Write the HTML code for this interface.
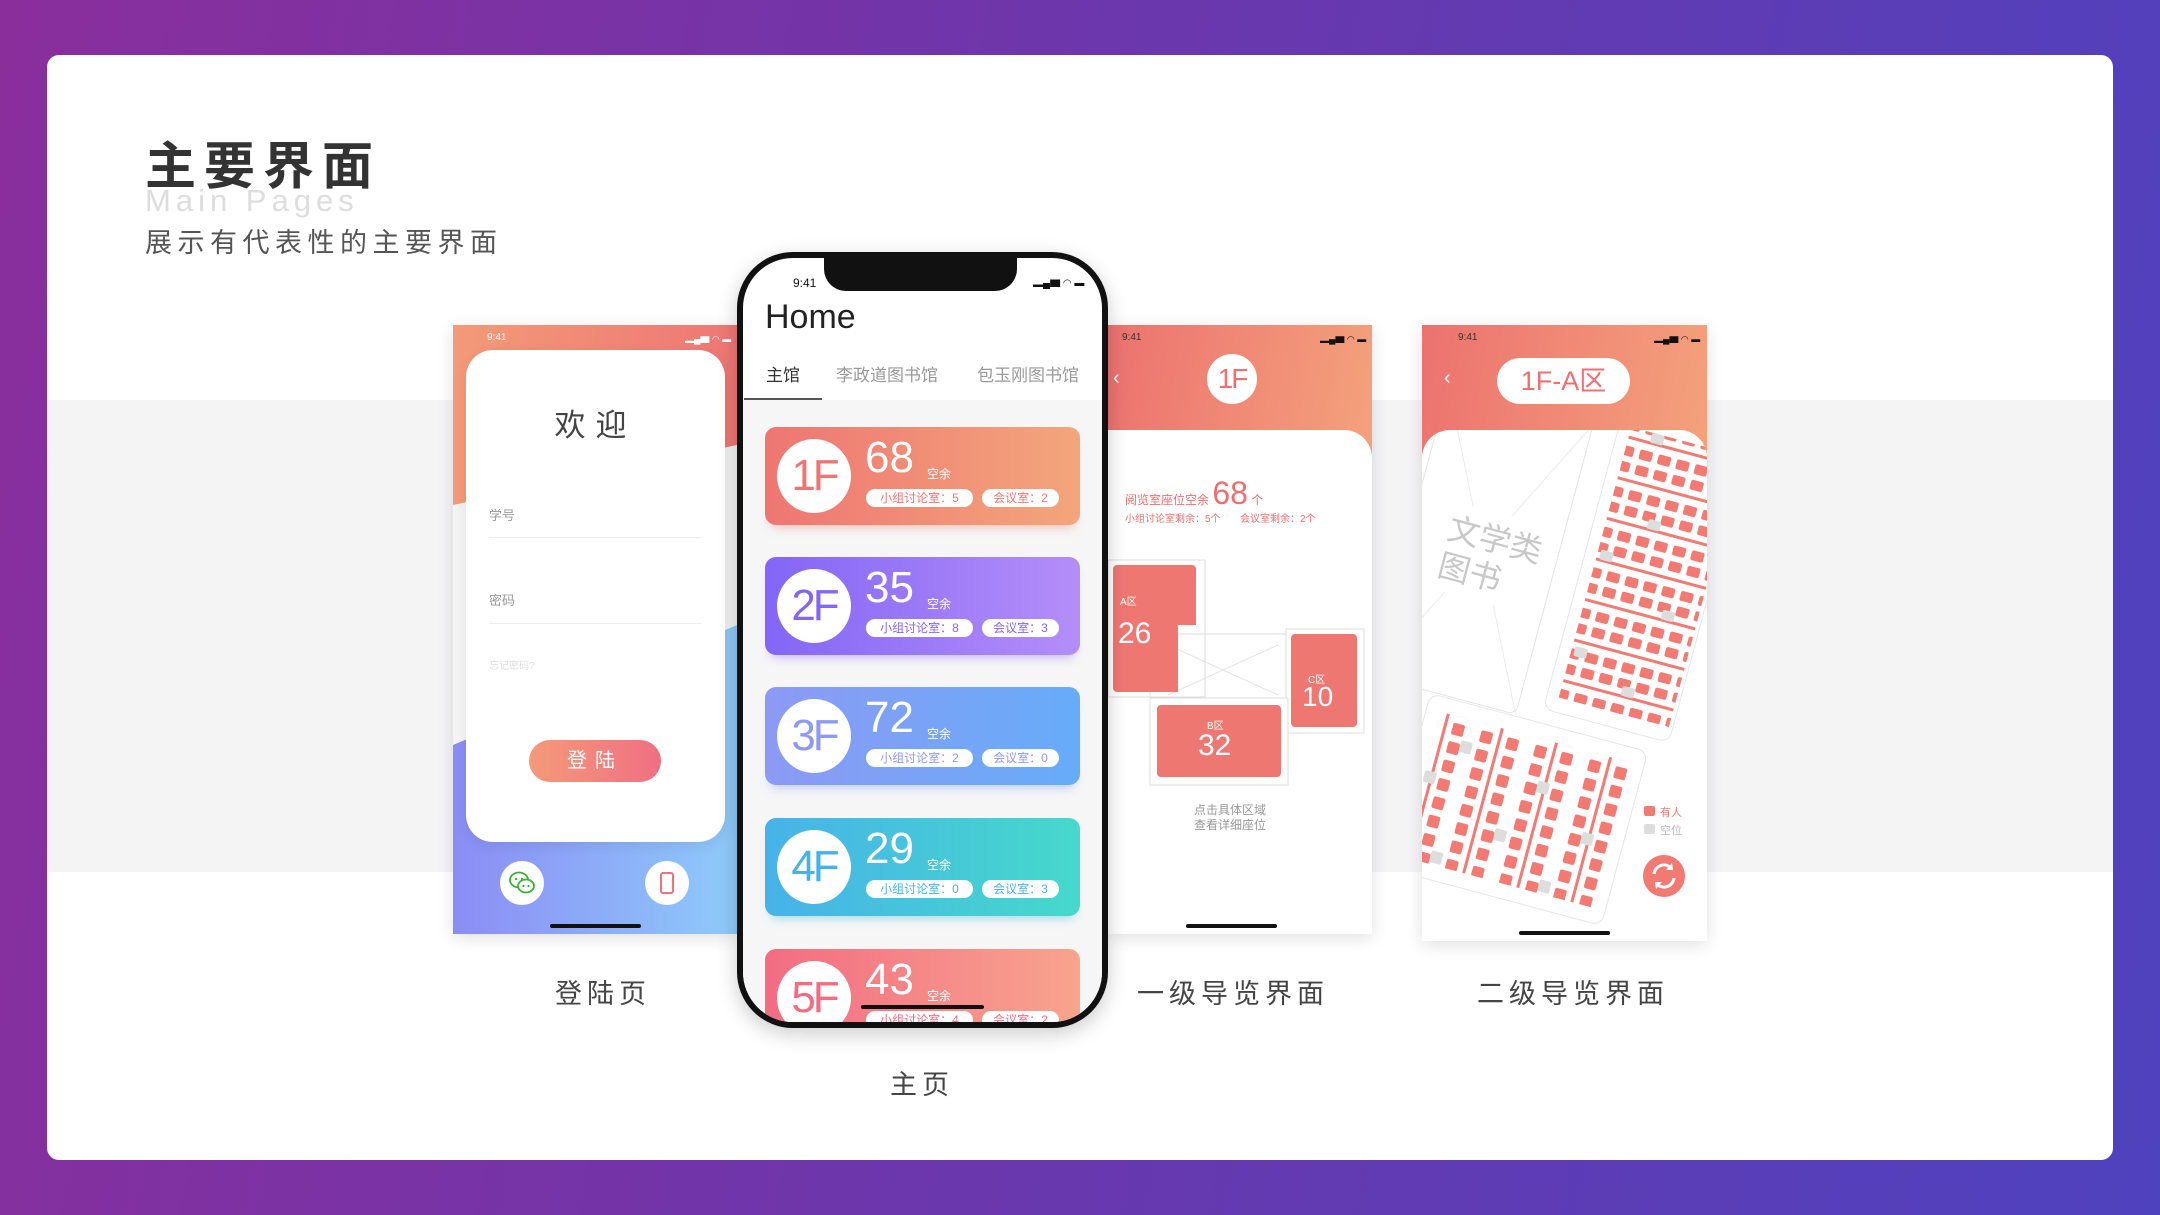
<!DOCTYPE html>
<html><head><meta charset="utf-8">
<style>
*{margin:0;padding:0;box-sizing:border-box}
body{width:2160px;height:1215px;overflow:hidden;background:linear-gradient(100deg,#8a2e9c 0%,#6a37ad 50%,#4f42be 100%);font-family:"Liberation Sans","Noto Sans CJK SC",sans-serif;position:relative}
.abs{position:absolute}
#card{left:47px;top:55px;width:2066px;height:1105px;background:#fff;border-radius:12px;overflow:hidden}
.band{left:0;top:345px;width:100%;height:472px;background:#f4f4f5}
.lbl{font-size:27px;color:#444;letter-spacing:5px;text-align:center;width:300px}
.scr{overflow:hidden;box-shadow:0 4px 16px rgba(0,0,0,.12)}
.hdr{background:linear-gradient(100deg,#ec726f,#f4a27c)}
.card{left:22px;width:315px;height:98px;border-radius:11px;color:#fff}
.circ{left:12px;top:12px;width:74px;height:74px;border-radius:50%;background:#fff;font-size:44px;text-align:center;line-height:74px;letter-spacing:-3px}
.num{left:80px;top:6px;font-size:44px}
.ky{left:140px;top:38px;font-size:12px}
.pill{top:62px;height:18px;border-radius:9px;background:#fff;font-size:12px;line-height:18px;text-align:center}
.hb{height:4px;border-radius:2px;background:#111}
</style></head><body>
<div id="card" class="abs">
 <div class="abs band"></div>
 <div class="abs" style="left:98px;top:70px;font-size:51px;font-weight:bold;color:#333;letter-spacing:8px">主要界面</div>
 <div class="abs" style="left:98px;top:128px;font-size:31px;color:#ddd;letter-spacing:5px">Main Pages</div>
 <div class="abs" style="left:98px;top:166px;font-size:27px;color:#555;letter-spacing:5.5px">展示有代表性的主要界面</div>
 <div class="abs lbl" style="left:406px;top:917px">登陆页</div>
 <div class="abs lbl" style="left:725px;top:1008px">主页</div>
 <div class="abs lbl" style="left:1036px;top:917px">一级导览界面</div>
 <div class="abs lbl" style="left:1376px;top:917px">二级导览界面</div>
</div>

<!-- login screen -->
<div class="abs scr" style="left:453px;top:325px;width:284px;height:609px;background:#f4f4f5">
 <svg class="abs" style="left:0;top:0" width="284" height="609">
  <defs>
   <linearGradient id="og" x1="0" y1="0" x2="1" y2="0"><stop offset="0" stop-color="#f39a78"/><stop offset="1" stop-color="#ee7774"/></linearGradient>
   <linearGradient id="bg2" x1="0" y1="0" x2="1" y2="0"><stop offset="0" stop-color="#8b8cf5"/><stop offset="1" stop-color="#8ecbfa"/></linearGradient>
  </defs>
  <polygon points="0,0 284,0 284,120 0,180" fill="url(#og)"/>
  <polygon points="0,420 284,300 284,609 0,609" fill="url(#bg2)"/>
 </svg>
 <div class="abs" style="left:34px;top:7px;font-size:10px;color:#fff">9:41</div>
 <div class="abs" style="left:232px;top:7px;font-size:9px;color:#fff">▂▄▆ ◠ ▬</div>
 <div class="abs" style="left:13px;top:25px;width:259px;height:492px;background:#fff;border-radius:27px;box-shadow:0 4px 14px rgba(0,0,0,.08)">
  <div class="abs" style="left:0;width:100%;top:50px;text-align:center;font-size:31px;color:#444;letter-spacing:10px">欢迎</div>
  <div class="abs" style="left:23px;top:155px;font-size:13px;color:#999">学号</div>
  <div class="abs" style="left:23px;top:187px;width:213px;height:1px;background:#eee"></div>
  <div class="abs" style="left:23px;top:240px;font-size:13px;color:#999">密码</div>
  <div class="abs" style="left:23px;top:273px;width:213px;height:1px;background:#eee"></div>
  <div class="abs" style="left:23px;top:307px;font-size:10px;color:#ddd">忘记密码?</div>
  <div class="abs" style="left:63px;top:390px;width:132px;height:42px;border-radius:21px;background:linear-gradient(90deg,#f59a7a,#f06f82);color:#fff;font-size:20px;text-align:center;line-height:42px;letter-spacing:8px">登陆</div>
 </div>
 <div class="abs" style="left:47px;top:536px;width:44px;height:44px;border-radius:50%;background:#fff">
  <svg width="44" height="44"><ellipse cx="19" cy="19" rx="9" ry="7.5" fill="none" stroke="#3cb034" stroke-width="1.8"/><ellipse cx="26" cy="25" rx="8" ry="6.5" fill="#fff" stroke="#3cb034" stroke-width="1.8"/><circle cx="16" cy="18" r="1.2" fill="#3cb034"/><circle cx="22" cy="18" r="1.2" fill="#3cb034"/><circle cx="23.5" cy="25" r="1.1" fill="#3cb034"/><circle cx="28.5" cy="25" r="1.1" fill="#3cb034"/></svg>
 </div>
 <div class="abs" style="left:192px;top:536px;width:44px;height:44px;border-radius:50%;background:#fff"><div class="abs" style="left:15px;top:11px;width:14px;height:22px;border:2px solid #f07080;border-radius:3px"></div></div>
 <div class="abs hb" style="left:97px;top:599px;width:91px"></div>
</div>

<!-- nav 1 -->
<div class="abs scr" style="left:1108px;top:325px;width:264px;height:609px;background:#fff">
 <div class="abs hdr" style="left:0;top:0;width:264px;height:140px"></div>
 <div class="abs" style="left:14px;top:7px;font-size:10px;color:#333">9:41</div>
 <div class="abs" style="left:212px;top:7px;font-size:9px;color:#111">▂▄▆ ◠ ▬</div>
 <div class="abs" style="left:5px;top:42px;font-size:20px;color:#fff">‹</div>
 <div class="abs" style="left:99px;top:29px;width:50px;height:50px;border-radius:50%;background:#fff;color:#ee7070;font-size:28px;text-align:center;line-height:50px;letter-spacing:-2px">1F</div>
 <div class="abs" style="left:0;top:105px;width:264px;height:504px;background:#fff;border-radius:0 28px 0 0"></div>
 <div class="abs" style="left:17px;top:150px;color:#ee6f6f;white-space:nowrap"><span style="font-size:12px">阅览室座位空余 </span><span style="font-size:32px">68</span><span style="font-size:12px"> 个</span></div>
 <div class="abs" style="left:17px;top:185px;font-size:10px;color:#ee6f6f;white-space:nowrap">小组讨论室剩余：5个 &nbsp; &nbsp; &nbsp; 会议室剩余：2个</div>
 <svg class="abs" style="left:0;top:0" width="264" height="609">
  <rect x="42" y="309" width="214" height="99" fill="#fff" stroke="#ddd"/>
  <line x1="60" y1="320" x2="170" y2="370" stroke="#e4e4e4"/><line x1="60" y1="370" x2="170" y2="320" stroke="#e4e4e4"/>
  <rect x="0" y="235" width="97" height="137" fill="none" stroke="#ddd"/>
  <path d="M9,240 H84 a4,4 0 0 1 4,4 V300 H70 V367 H9 a4,4 0 0 1 -4,-4 V244 a4,4 0 0 1 4,-4z" fill="#ee7772"/>
  <rect x="178" y="304" width="78" height="104" fill="#fff" stroke="#ddd"/>
  <rect x="183" y="309" width="66" height="93" rx="4" fill="#ee7772"/>
  <rect x="42" y="373" width="138" height="87" fill="#fff" stroke="#ddd"/>
  <rect x="49" y="380" width="124" height="72" rx="4" fill="#ee7772"/>
  <text x="12" y="280" font-size="10" fill="#fff">A区</text>
  <text x="10" y="318" font-size="30" fill="#fff">26</text>
  <text x="200" y="358" font-size="10" fill="#fff">C区</text>
  <text x="194" y="381" font-size="28" fill="#fff">10</text>
  <text x="99" y="404" font-size="10" fill="#fff">B区</text>
  <text x="90" y="430" font-size="30" fill="#fff">32</text>
  <text x="122" y="489" font-size="12" fill="#999" text-anchor="middle">点击具体区域</text>
  <text x="122" y="504" font-size="12" fill="#999" text-anchor="middle">查看详细座位</text>
 </svg>
 <div class="abs hb" style="left:78px;top:599px;width:91px"></div>
</div>

<!-- nav 2 -->
<div class="abs scr" style="left:1422px;top:325px;width:285px;height:616px;background:#fff">
 <div class="abs hdr" style="left:0;top:0;width:285px;height:140px"></div>
 <div class="abs" style="left:36px;top:7px;font-size:10px;color:#333">9:41</div>
 <div class="abs" style="left:232px;top:7px;font-size:9px;color:#111">▂▄▆ ◠ ▬</div>
 <div class="abs" style="left:22px;top:42px;font-size:20px;color:#fff">‹</div>
 <div class="abs" style="left:75px;top:33px;width:133px;height:46px;border-radius:23px;background:#fff;color:#ee7070;font-size:27px;text-align:center;line-height:46px">1F-A区</div>
 <div class="abs" style="left:0;top:105px;width:285px;height:511px;background:#fff;border-radius:28px 28px 0 0;overflow:hidden">
  <svg width="285" height="511">
   <defs>
    <pattern id="rs" width="19" height="42" patternUnits="userSpaceOnUse"><rect x="3" y="0" width="13" height="10" rx="2" fill="#f27a72"/><rect x="3" y="16" width="13" height="10" rx="2" fill="#f27a72"/><rect x="0" y="32" width="19" height="3" fill="#f27a72"/></pattern>
    <pattern id="cs" width="56" height="19" patternUnits="userSpaceOnUse"><rect x="0" y="3" width="12" height="12" rx="2" fill="#f27a72"/><rect x="18" y="0" width="3" height="19" fill="#f27a72"/><rect x="27" y="3" width="12" height="12" rx="2" fill="#f27a72"/></pattern>
   </defs>
   <g transform="translate(60,120) rotate(15)">
    <rect x="-75" y="-150" width="150" height="300" rx="8" fill="none" stroke="#e4e4e4"/>
    <line x1="-75" y1="-150" x2="75" y2="150" stroke="#ececec"/><line x1="75" y1="-150" x2="-75" y2="150" stroke="#ececec"/>
    <rect x="-45" y="-40" width="100" height="90" fill="#fff"/>
    <text x="-38" y="-2" font-size="32" fill="#c8c8c8">文学类</text>
    <text x="-38" y="36" font-size="32" fill="#c8c8c8">图书</text>
   </g>
   <g transform="translate(220,150) rotate(15)">
    <rect x="-62" y="-160" width="130" height="310" rx="10" fill="#fff" stroke="#e6e6e6"/>
    <rect x="-50" y="-145" width="114" height="280" fill="url(#rs)"/>
    <rect x="-28" y="-145" width="13" height="10" rx="2" fill="#ddd"/><rect x="47" y="-103" width="13" height="10" rx="2" fill="#ddd"/><rect x="-9" y="-61" width="13" height="10" rx="2" fill="#ddd"/><rect x="-47" y="-19" width="13" height="10" rx="2" fill="#ddd"/><rect x="28" y="23" width="13" height="10" rx="2" fill="#ddd"/><rect x="-47" y="81" width="13" height="10" rx="2" fill="#ddd"/><rect x="9" y="107" width="13" height="10" rx="2" fill="#ddd"/>
   </g>
   <g transform="translate(95,385) rotate(15)">
    <rect x="-115" y="-95" width="225" height="180" rx="10" fill="#fff" stroke="#e6e6e6"/>
    <rect x="-100" y="-80" width="200" height="150" fill="url(#cs)"/>
    <rect x="-73" y="-58" width="12" height="12" rx="2" fill="#ddd"/><rect x="-100" y="-20" width="12" height="12" rx="2" fill="#ddd"/><rect x="-17" y="18" width="12" height="12" rx="2" fill="#ddd"/><rect x="12" y="-39" width="12" height="12" rx="2" fill="#ddd"/><rect x="68" y="-1" width="12" height="12" rx="2" fill="#ddd"/><rect x="39" y="56" width="12" height="12" rx="2" fill="#ddd"/><rect x="-73" y="56" width="12" height="12" rx="2" fill="#ddd"/>
   </g>
   <rect x="222" y="376" width="11" height="10" rx="2" fill="#f27a72"/><text x="238" y="386" font-size="11" fill="#f27a72">有人</text>
   <rect x="222" y="394" width="11" height="10" rx="2" fill="#ddd"/><text x="238" y="404" font-size="11" fill="#bbb">空位</text>
   <circle cx="242" cy="446" r="21" fill="#f27a72"/>
   <path d="M232,444 a10,10 0 0 1 18,-5 M252,448 a10,10 0 0 1 -18,5" stroke="#fff" stroke-width="3" fill="none"/>
   <path d="M250,433 l1,7 -7,0z M234,459 l-1,-7 7,0z" fill="#fff"/>
  </svg>
 </div>
 <div class="abs hb" style="left:97px;top:606px;width:91px"></div>
</div>

<!-- center phone -->
<div class="abs" style="left:737px;top:252px;width:371px;height:776px;border:6px solid #111;border-radius:56px;background:#fff;overflow:hidden;box-shadow:0 6px 20px rgba(0,0,0,.2)">
 <div class="abs" style="left:81px;top:-1px;width:193px;height:34px;background:#111;border-radius:0 0 22px 22px"></div>
 <div class="abs" style="left:50px;top:18px;font-size:12px;color:#111">9:41</div>
 <div class="abs" style="left:290px;top:16px;font-size:10px;color:#111">▂▄▆ ◠ ▬</div>
 <div class="abs" style="left:22px;top:40px;font-size:34px;color:#222">Home</div>
 <div class="abs" style="left:23px;top:103px;font-size:17px;color:#333">主馆</div>
 <div class="abs" style="left:93px;top:103px;font-size:17px;color:#999">李政道图书馆</div>
 <div class="abs" style="left:234px;top:103px;font-size:17px;color:#999">包玉刚图书馆</div>
 <div class="abs" style="left:0;top:142px;width:359px;height:630px;background:#f6f6f7"></div>
 <div class="abs" style="left:1px;top:140px;width:78px;height:2px;background:#555"></div>

 <div class="abs card" style="top:169px;background:linear-gradient(90deg,#ee7672,#f3a67b);box-shadow:0 8px 10px -6px rgba(240,130,110,.5)">
  <div class="abs circ" style="color:#ee7672">1F</div><div class="abs num" style="left:100px">68</div><div class="abs ky" style="left:162px">空余</div>
  <div class="abs pill" style="left:101px;width:107px;color:#ee7672">小组讨论室：5</div><div class="abs pill" style="left:217px;width:77px;color:#ee7672">会议室：2</div>
 </div>
 <div class="abs card" style="top:299px;background:linear-gradient(90deg,#8366f6,#b48ef8);box-shadow:0 8px 10px -6px rgba(150,110,240,.5)">
  <div class="abs circ" style="color:#8366f6">2F</div><div class="abs num" style="left:100px">35</div><div class="abs ky" style="left:162px">空余</div>
  <div class="abs pill" style="left:101px;width:107px;color:#8366f6">小组讨论室：8</div><div class="abs pill" style="left:217px;width:77px;color:#8366f6">会议室：3</div>
 </div>
 <div class="abs card" style="top:429px;background:linear-gradient(90deg,#8d9af5,#66acf8);box-shadow:0 8px 10px -6px rgba(110,150,240,.5)">
  <div class="abs circ" style="color:#8d9af5">3F</div><div class="abs num" style="left:100px">72</div><div class="abs ky" style="left:162px">空余</div>
  <div class="abs pill" style="left:101px;width:107px;color:#8d9af5">小组讨论室：2</div><div class="abs pill" style="left:217px;width:77px;color:#8d9af5">会议室：0</div>
 </div>
 <div class="abs card" style="top:560px;background:linear-gradient(90deg,#47b2e9,#46d9cb);box-shadow:0 8px 10px -6px rgba(70,190,220,.5)">
  <div class="abs circ" style="color:#47b2e9">4F</div><div class="abs num" style="left:100px">29</div><div class="abs ky" style="left:162px">空余</div>
  <div class="abs pill" style="left:101px;width:107px;color:#47b2e9">小组讨论室：0</div><div class="abs pill" style="left:217px;width:77px;color:#47b2e9">会议室：3</div>
 </div>
 <div class="abs card" style="top:691px;background:linear-gradient(90deg,#f36c82,#f8a48e)">
  <div class="abs circ" style="color:#f36c82">5F</div><div class="abs num" style="left:100px">43</div><div class="abs ky" style="left:162px">空余</div>
  <div class="abs pill" style="left:101px;width:107px;color:#f36c82">小组讨论室：4</div><div class="abs pill" style="left:217px;width:77px;color:#f36c82">会议室：2</div>
 </div>
 <div class="abs hb" style="left:118px;top:747px;width:123px"></div>
</div>
</body></html>
